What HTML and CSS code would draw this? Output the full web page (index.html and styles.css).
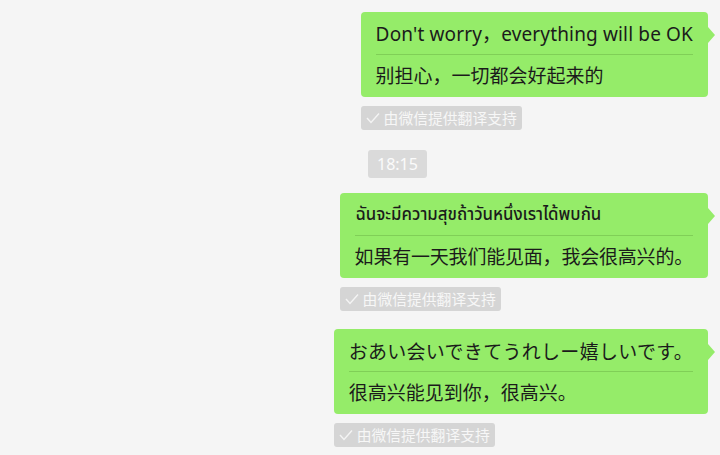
FILE: index.html
```html
<!DOCTYPE html>
<html lang="zh-CN">
<head>
<meta charset="utf-8">
<title>Chat</title>
<link rel="stylesheet" href="styles.css">
</head>
<body>
<div class="chat">
  <div class="group g1">
    <div class="bubble">
      <div class="orig en">Don't worry，everything will be OK</div>
      <div class="trans">别担心，一切都会好起来的</div>
    </div>
    <div class="tag"><svg class="check" viewBox="0 0 14 12" width="14" height="12"><polyline points="1,6 5,10.5 13,1.5" fill="none" stroke="#f4f4f4" stroke-width="1.4"/></svg><span>由微信提供翻译支持</span></div>
  </div>

  <div class="time-row"><span class="time">18:15</span></div>

  <div class="group g2">
    <div class="bubble">
      <div class="orig thai">ฉันจะมีความสุขถ้าวันหนึ่งเราได้พบกัน</div>
      <div class="trans tight">如果有一天我们能见面，我会很高兴的。</div>
    </div>
    <div class="tag"><svg class="check" viewBox="0 0 14 12" width="14" height="12"><polyline points="1,6 5,10.5 13,1.5" fill="none" stroke="#f4f4f4" stroke-width="1.4"/></svg><span>由微信提供翻译支持</span></div>
  </div>

  <div class="group g3">
    <div class="bubble">
      <div class="orig jp">おあい会いできてうれしー嬉しいです。</div>
      <div class="trans">很高兴能见到你，很高兴。</div>
    </div>
    <div class="tag"><svg class="check" viewBox="0 0 14 12" width="14" height="12"><polyline points="1,6 5,10.5 13,1.5" fill="none" stroke="#f4f4f4" stroke-width="1.4"/></svg><span>由微信提供翻译支持</span></div>
  </div>
</div>
</body>
</html>
```

FILE: styles.css
```css
html, body {
  margin: 0;
  padding: 0;
  background: #f5f5f5;
}
body {
  width: 720px;
  height: 455px;
  overflow: hidden;
  font-family: "Noto Sans", "Noto Sans CJK SC", sans-serif;
  color: #1b1b1b;
}
.chat {
  display: flex;
  flex-direction: column;
  padding: 12px 12px 0 0;
}
.group {
  align-self: flex-end;
  display: flex;
  flex-direction: column;
}
.g2 { margin-top: 15px; }
.g3 { margin-top: 18px; }
.bubble {
  position: relative;
  background: #95ec69;
  border-radius: 4px;
  padding: 0 15px;
  font-size: 19px;
}
.bubble::after {
  content: "";
  position: absolute;
  right: -7px;
  top: 15px;
  border-left: 7px solid #95ec69;
  border-top: 8px solid transparent;
  border-bottom: 8px solid transparent;
}
.orig {
  padding: 10px 0 8px;
  line-height: 24px;
  white-space: nowrap;
}
.en {
  letter-spacing: 0.15px;
}
.thai {
  font-family: "Noto Sans Thai", "Noto Sans", "DejaVu Sans", sans-serif;
  font-size: 16.8px;
  font-weight: 500;
  padding-left: 1px;
}
.jp {
  font-family: "Noto Sans CJK JP", "Noto Sans", sans-serif;
  letter-spacing: 0.3px;
}
.trans {
  border-top: 1px solid #80cf57;
  padding: 8px 0 10px;
  line-height: 24px;
  white-space: nowrap;
  font-family: "Noto Sans CJK SC", sans-serif;
}
.tight {
  letter-spacing: -0.2px;
}
.tag {
  align-self: flex-start;
  margin-top: 9px;
  height: 24px;
  display: flex;
  align-items: center;
  gap: 4px;
  padding: 0 5px;
  background: #d5d5d5;
  border-radius: 3px;
  color: #f7f7f7;
  font-family: "Noto Sans CJK SC", sans-serif;
  font-size: 14.8px;
  line-height: 24px;
}
.check {
  display: block;
  flex: none;
}
.time-row {
  display: flex;
  margin-top: 20px;
  padding-left: 368px;
}
.time {
  display: block;
  height: 28px;
  line-height: 28px;
  padding: 0 9px;
  background: #dadada;
  border-radius: 3px;
  color: #fbfbfb;
  font-size: 16px;
  font-family: "Noto Sans", sans-serif;
}
```
